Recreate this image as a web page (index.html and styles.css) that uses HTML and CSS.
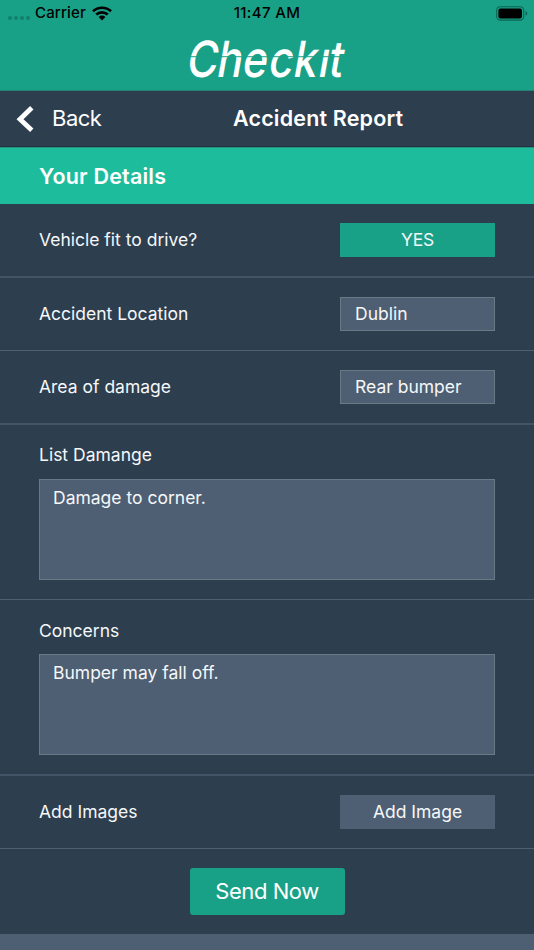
FILE: index.html
```html
<!DOCTYPE html>
<html lang="en">
<head>
<meta charset="utf-8">
<title>Accident Report</title>
<link rel="stylesheet" href="styles.css">
</head>
<body>
<div class="app">
  <header class="brand">
    <div class="status">
      <div class="status-left">
        <span class="signal"><i></i><i></i><i></i><i></i></span>
        <span class="carrier">Carrier</span>
        <svg class="wifi" width="20" height="15" viewBox="0 0 20 15">
          <g fill="none" stroke="#000" stroke-width="2.7">
            <path d="M1 5.2C6 .6 14 .6 19 5.2"/>
            <path d="M4.2 8.6C7.5 5.5 12.5 5.5 15.8 8.6"/>
          </g>
          <path d="M6.6 10.9Q10 8.1 13.4 10.9L10 14.4Z"/>
        </svg>
      </div>
      <span class="clock">11:47 AM</span>
      <svg class="battery" width="32" height="15" viewBox="0 0 32 15">
        <rect x=".7" y=".7" width="27" height="13.4" rx="3.6" fill="none" stroke="#0e6453" stroke-width="1.1"/>
        <rect x="2.4" y="2.4" width="23.6" height="10" rx="2"/>
        <path d="M29.6 5.1Q31.2 5.8 31.2 7.4T29.6 9.8Z" fill="#0e6453"/>
      </svg>
    </div>
    <svg class="logo" width="170" height="56" viewBox="0 0 170 56" role="img" aria-label="Checkit">
      <g transform="translate(0 45) skewX(-10) scale(.85 1)">
        <text class="logo-text" x="0 35.6 65.5 96.5 125.5 155 167" y="0">Checkit</text>
        <rect class="logo-slit" x="156.5" y="-40" width="10.2" height="11"/>
      </g>
      <rect class="logo-slit" x="0" y="24.2" width="170" height="1"/>
    </svg>
  </header>
  <nav class="navbar">
    <svg class="chevron" width="20" height="28" viewBox="0 0 20 28"><path d="M16.8 2.8L5 14.3L16.8 25.3" fill="none" stroke="#fff" stroke-width="4.8"/></svg>
    <span class="back">Back</span>
    <h1 class="title">Accident Report</h1>
  </nav>
  <h2 class="section"><span class="heading">Your Details</span></h2>
  <main>
    <div class="row soft"><span class="label">Vehicle fit to drive?</span><span class="control yes">YES</span></div>
    <div class="row"><span class="label">Accident Location</span><span class="control field">Dublin</span></div>
    <div class="row soft"><span class="label">Area of damage</span><span class="control field">Rear bumper</span></div>
    <div class="block"><span class="label">List Damange</span><div class="area">Damage to corner.</div></div>
    <div class="block soft"><span class="label">Concerns</span><div class="area">Bumper may fall off.</div></div>
    <div class="row images"><span class="label">Add Images</span><span class="control add">Add Image</span></div>
    <div class="submit"><span class="send">Send Now</span></div>
  </main>
  <footer class="footer"></footer>
</div>
</body>
</html>
```
FILE: styles.css
```css
* { box-sizing: border-box; }
body {
  margin: 0;
  background: #2d3e4f;
  color: #f5f7f9;
  font-family: Inter, "Liberation Sans", sans-serif;
}
.app { width: 534px; height: 950px; display: flex; flex-direction: column; overflow: hidden; }
.brand { height: 91px; flex: none; background: #19a187; border-bottom: 1px solid #258373; }
.status {
  height: 26px; padding: 0 6px 0 8px;
  display: grid; grid-template-columns: 1fr auto 1fr; align-items: center;
  color: #000; font-size: 15px; font-weight: 500; line-height: 26px;
}
.status-left { display: flex; align-items: center; }
.signal { display: flex; gap: 2px; margin: 9px 5px 0 0; }
.signal i { width: 4px; height: 4px; border-radius: 50%; background: #13806b; }
.carrier { letter-spacing: .15px; }
.wifi { margin-left: 6px; }
.clock { letter-spacing: .35px; margin-right: 2px; }
.battery { justify-self: end; }
.logo { display: block; margin: 6px 0 0 185px; overflow: visible; }
.logo-text { font-family: Inter, sans-serif; font-size: 50px; font-weight: 500; fill: #fff; }
.logo-slit { fill: #19a187; }
.navbar {
  height: 56px; flex: none; padding-left: 15px;
  display: flex; align-items: center;
  color: #fff; border-bottom: 1px solid #25313f;
}
.back { width: 181px; margin-left: 17px; padding-bottom: 1px; font-size: 22px; letter-spacing: -.5px; }
.title { margin: 0; padding-bottom: 2px; font-size: 21.5px; font-weight: 600; letter-spacing: .17px; }
.section {
  height: 57px; flex: none; margin: 0; padding: 0 0 1px 39px;
  display: flex; align-items: center;
  background: #1dbc9c; color: #fff; border-top: 1px solid #25947f;
  font-size: 21.5px; font-weight: 600; letter-spacing: .2px;
}
main { flex: none; }
.row {
  height: 73px; padding: 0 39px;
  display: flex; align-items: center; justify-content: space-between;
  border-bottom: 1px solid #4e5f73;
  font-size: 17.5px;
}
.row.soft { height: 74px; border-bottom: 2px solid #435468; }
.label { font-size: 17.5px; }
.row .label { padding-bottom: 1px; }
.control {
  width: 155px; height: 34px; padding-bottom: 1px;
  display: flex; align-items: center; justify-content: center;
}
.yes { background: #19a187; letter-spacing: -.2px; }
.field { justify-content: flex-start; padding: 0 0 2px 14px; background: #4e5f73; border: 1px solid #6a7985; }
.add { background: #4e5f73; }
.block { height: 175px; padding: 19px 39px 0; border-bottom: 1px solid #4e5f73; }
.block.soft { height: 176px; border-bottom: 2px solid #435468; }
.block .label { display: block; height: 35px; line-height: 22px; }
.block.soft .label { padding-top: 1px; }
.area {
  height: 101px; padding: 7px 13px;
  background: #4e5f73; border: 1px solid #6a7985;
  font-size: 17.5px; line-height: 22px;
}
.submit { height: 85px; display: flex; align-items: center; justify-content: center; }
.send {
  width: 155px; height: 47px; border-radius: 3px; padding-bottom: 1px;
  display: flex; align-items: center; justify-content: center;
  background: #19a187; color: #fff; font-size: 22px; letter-spacing: -.45px;
}
.footer { flex: 1; background: #4e5f73; }
```
